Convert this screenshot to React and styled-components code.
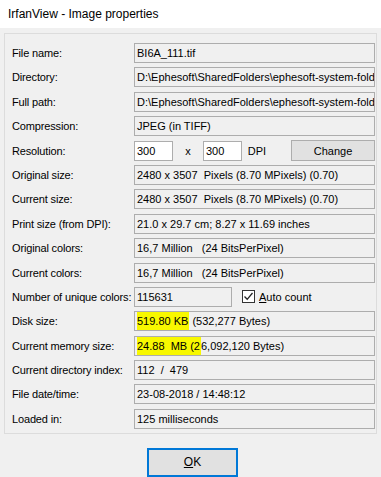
import React from "react";
import styled, { createGlobalStyle } from "styled-components";

const Global = createGlobalStyle`
  html, body { margin: 0; padding: 0; background: #f0f0f0; }
  body { font-family: "Liberation Sans", Arial, sans-serif; }
`;

const Window = styled.div`
  width: 381px;
  height: 477px;
  display: flex;
  flex-direction: column;
  background: #f0f0f0;
  font-family: "Liberation Sans", Arial, sans-serif;
  font-size: 11px;
  color: #000;
  overflow: hidden;
`;

const TitleBar = styled.div`
  height: 28px;
  flex: none;
  background: #fff;
  display: flex;
  align-items: center;
  padding-left: 8px;
  font-size: 12px;
  color: #000;
`;

const Body = styled.div`
  flex: 1;
  padding: 5px 4px 0 4px;
  display: flex;
  flex-direction: column;
`;

const GroupBox = styled.div`
  border: 1px solid #dcdcdc;
  padding: 9px 1px 4px 7px;
  display: flex;
  flex-direction: column;
  gap: 4.4px;
`;

const Row = styled.div`
  display: grid;
  grid-template-columns: 122px 1fr;
  align-items: center;
  height: 20px;
`;

const Label = styled.div`
  white-space: nowrap;
  letter-spacing: -0.15px;
`;

const Field = styled.div`
  box-sizing: border-box;
  height: 20px;
  width: ${(p) => (p.$w ? `${p.$w}px` : "100%")};
  border: 1px solid #adadad;
  background: ${(p) => (p.$white ? "#fff" : "#f0f0f0")};
  padding: 0 2px;
  display: flex;
  align-items: center;
  white-space: nowrap;
  overflow: hidden;
`;

const Inline = styled.div`
  display: flex;
  align-items: center;
  height: 20px;
`;

const Sep = styled.span`
  width: ${(p) => p.$w}px;
  text-align: center;
  flex: none;
`;

const Button = styled.button`
  box-sizing: border-box;
  font-family: inherit;
  font-size: ${(p) => (p.$big ? "12px" : "11px")};
  color: #000;
  background: #e1e1e1;
  border: ${(p) => (p.$default ? "2px solid #0078d7" : "1px solid #adadad")};
  width: ${(p) => p.$w}px;
  height: ${(p) => p.$h}px;
  margin-left: ${(p) => p.$ml || "0"};
  padding: 0;
  display: flex;
  align-items: center;
  justify-content: center;
`;

const Hl = styled.span`
  background: #f8f800;
  padding: 3px 1px 3px 0;
`;

const CheckWrap = styled.label`
  display: flex;
  align-items: center;
  gap: 4px;
  margin-left: 10px;
`;

const Box = styled.span`
  width: 13px;
  height: 13px;
  box-sizing: border-box;
  border: 1px solid #333;
  background: #fff;
  display: flex;
  align-items: center;
  justify-content: center;
`;

const Footer = styled.div`
  display: flex;
  justify-content: center;
  padding-top: 14px;
  padding-left: 4px;
`;

const U = styled.span`
  text-decoration: underline;
`;

const Pre = styled.span`
  white-space: pre;
`;

const rows = [
  ["File name:", "BI6A_111.tif"],
  ["Directory:", "D:\\Ephesoft\\SharedFolders\\ephesoft-system-folder\\batch"],
  ["Full path:", "D:\\Ephesoft\\SharedFolders\\ephesoft-system-folder\\batch\\BI6A_111.tif"],
  ["Compression:", "JPEG (in TIFF)"],
];

const rows2 = [
  ["Original size:", "2480 x 3507  Pixels (8.70 MPixels) (0.70)"],
  ["Current size:", "2480 x 3507  Pixels (8.70 MPixels) (0.70)"],
  ["Print size (from DPI):", "21.0 x 29.7 cm; 8.27 x 11.69 inches"],
  ["Original colors:", "16,7 Million   (24 BitsPerPixel)"],
  ["Current colors:", "16,7 Million   (24 BitsPerPixel)"],
];

const rows3 = [
  ["Current directory index:", "112  /  479"],
  ["File date/time:", "23-08-2018 / 14:48:12"],
  ["Loaded in:", "125 milliseconds"],
];

export default function App() {
  return (
    <Window>
      <Global />
      <TitleBar>IrfanView - Image properties</TitleBar>
      <Body>
        <GroupBox>
          {rows.map(([l, v]) => (
            <Row key={l}>
              <Label>{l}</Label>
              <Field>{v}</Field>
            </Row>
          ))}
          <Row>
            <Label>Resolution:</Label>
            <Inline>
              <Field $w={39} $white>300</Field>
              <Sep $w={30}>x</Sep>
              <Field $w={39} $white>300</Field>
              <Sep $w={30}>DPI</Sep>
              <Button $w={84} $h={21} $ml="auto">Change</Button>
            </Inline>
          </Row>
          {rows2.map(([l, v]) => (
            <Row key={l}>
              <Label>{l}</Label>
              <Field><Pre>{v}</Pre></Field>
            </Row>
          ))}
          <Row>
            <Label>Number of unique colors:</Label>
            <Inline>
              <Field $w={98}>115631</Field>
              <CheckWrap>
                <Box>
                  <svg width="11" height="11" viewBox="0 0 11 11">
                    <path d="M1.5 5.5 L4.2 8.3 L9.5 2" fill="none" stroke="#222" strokeWidth="1.3" />
                  </svg>
                </Box>
                <span><U>A</U>uto count</span>
              </CheckWrap>
            </Inline>
          </Row>
          <Row>
            <Label>Disk size:</Label>
            <Field><Pre><Hl>519.80 KB</Hl> (532,277 Bytes)</Pre></Field>
          </Row>
          <Row>
            <Label>Current memory size:</Label>
            <Field><Pre><Hl>24.88  MB (2</Hl>6,092,120 Bytes)</Pre></Field>
          </Row>
          {rows3.map(([l, v]) => (
            <Row key={l}>
              <Label>{l}</Label>
              <Field><Pre>{v}</Pre></Field>
            </Row>
          ))}
        </GroupBox>
        <Footer>
          <Button $w={91} $h={29} $default $big><U>O</U>K</Button>
        </Footer>
      </Body>
    </Window>
  );
}
